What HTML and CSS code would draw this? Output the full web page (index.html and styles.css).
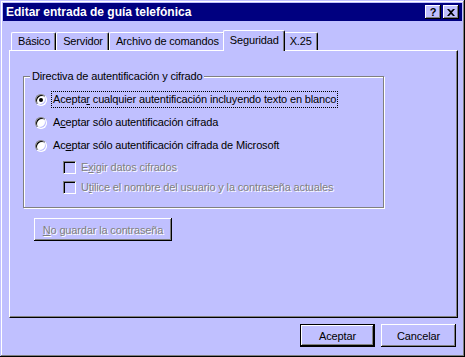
FILE: index.html
```html
<!DOCTYPE html>
<html lang="es">
<head>
    <meta charset="UTF-8">
    <title>Editar entrada de guía telefónica</title>
    <link rel="stylesheet" href="styles.css">
</head>
<body>
    <div class="ventana">
        <div class="titulo">
            <span>Editar entrada de guía telefónica</span>
            <div class="titulo-botones">
                <span class="tbtn">?</span>
                <span class="tbtn">
                    <svg width="8" height="7" viewBox="0 0 8 7"><path d="M0 0h2l2 2 2-2h2L5 3.5 8 7H6L4 5 2 7H0l3-3.5z" fill="#000"/></svg>
                </span>
            </div>
        </div>

        <div class="pestanas">
            <div class="pestana primera">Básico</div>
            <div class="pestana">Servidor</div>
            <div class="pestana">Archivo de comandos</div>
            <div class="pestana activa">Seguridad</div>
            <div class="pestana">X.25</div>
        </div>

        <div class="panel">
            <div class="grupo">
                <div class="grupo-titulo">Directiva de autentificación y cifrado</div>

                <div class="opcion">
                    <span class="radio marcado"></span>
                    <span class="etiqueta foco">Acepta<u>r</u> cualquier autentificación incluyendo texto en blanco</span>
                </div>
                <div class="opcion">
                    <span class="radio"></span>
                    <span class="etiqueta">A<u>c</u>eptar sólo autentificación cifrada</span>
                </div>
                <div class="opcion">
                    <span class="radio"></span>
                    <span class="etiqueta">Ac<u>e</u>ptar sólo autentificación cifrada de Microsoft</span>
                </div>
                <div class="casilla-fila">
                    <span class="casilla"></span>
                    <span class="deshabilitado">E<u>x</u>igir datos cifrados</span>
                </div>
                <div class="casilla-fila">
                    <span class="casilla"></span>
                    <span class="deshabilitado">U<u>t</u>ilice el nombre del usuario y la contraseña actuales</span>
                </div>
            </div>

            <button type="button" class="boton ancho deshabilitado"><u>N</u>o guardar la contraseña</button>
        </div>

        <div class="acciones">
            <button type="button" class="boton defecto">Aceptar</button>
            <button type="button" class="boton">Cancelar</button>
        </div>
    </div>
</body>
</html>
```

FILE: styles.css
```css
body {
    margin: 0;
    background-color: #c0c0ff;
    font-family: "Liberation Sans", Arial, sans-serif;
    font-size: 11px;
    letter-spacing: -0.15px;
    color: #000;
}
.ventana {
    width: 465px;
    height: 357px;
    box-sizing: border-box;
    padding: 3px;
    display: flex;
    flex-direction: column;
    background: #c0c0ff;
    box-shadow: inset -1px -1px 0 #000, inset 1px 1px 0 #c0c0ff, inset -2px -2px 0 #808080, inset 2px 2px 0 #fff;
}
.titulo {
    height: 18px;
    flex: none;
    display: flex;
    align-items: center;
    justify-content: space-between;
    padding: 0 3px;
    background: #000080;
    color: #fff;
    font-weight: bold;
    font-size: 12px;
    letter-spacing: 0;
}
.titulo-botones {
    display: flex;
    gap: 2px;
}
.tbtn {
    width: 16px;
    height: 14px;
    box-sizing: border-box;
    display: flex;
    align-items: center;
    justify-content: center;
    background: #c0c0ff;
    color: #000;
    font-size: 11px;
    box-shadow: inset -1px -1px 0 #000, inset 1px 1px 0 #fff, inset -2px -2px 0 #808080;
}
.pestanas {
    display: flex;
    align-items: flex-end;
    height: 21px;
    margin: 9px 0 -1px 6px;
    position: relative;
    z-index: 1;
}
.pestana {
    height: 18px;
    box-sizing: border-box;
    margin-bottom: 1px;
    padding: 2px 5px 0 6px;
    border-top: 1px solid #fff;
    border-left: 1px solid #fff;
    border-right: 1px solid #000;
    border-radius: 2px 2px 0 0;
    box-shadow: inset -1px 0 0 #808080;
    background: #c0c0ff;
    white-space: nowrap;
}
.primera {
    margin-left: 2px;
}
.pestana.activa {
    height: 21px;
    margin: 0 -2px;
    padding: 3px 5px 0 6px;
    position: relative;
    z-index: 2;
}
.panel {
    height: 268px;
    flex: none;
    box-sizing: border-box;
    margin: 0 4px 0 6px;
    padding: 25px 0 0 13px;
    border-top: 1px solid #fff;
    border-left: 1px solid #fff;
    border-right: 1px solid #000;
    border-bottom: 1px solid #000;
    box-shadow: inset -1px -1px 0 #808080;
}
.grupo {
    width: 361px;
    box-sizing: border-box;
    padding: 0 0 10px 11px;
    border: 1px solid #808080;
    box-shadow: inset 1px 1px 0 #fff, 1px 1px 0 #fff;
}
.grupo-titulo {
    width: fit-content;
    margin: -7px 0 5px -5px;
    padding: 0 2px;
    line-height: 13px;
    background: #c0c0ff;
}
.opcion {
    height: 23px;
    display: flex;
    align-items: center;
}
.radio {
    width: 12px;
    height: 12px;
    flex: none;
    box-sizing: border-box;
    border-radius: 50%;
    border: 1px solid;
    border-color: #808080 #fff #fff #808080;
    background: #fff;
    box-shadow: inset 1px 1px 0 #000, inset -1px -1px 0 #c0c0ff;
    margin-right: 4px;
    position: relative;
}
.radio.marcado::after {
    content: "";
    position: absolute;
    left: 3px;
    top: 3px;
    width: 4px;
    height: 4px;
    border-radius: 50%;
    background: #000;
}
.etiqueta {
    padding: 1px;
    line-height: 13px;
    border: 1px dotted transparent;
}
.etiqueta.foco {
    border-color: #000;
}
.casilla-fila {
    height: 20px;
    display: flex;
    align-items: center;
    padding-left: 28px;
}
.casilla {
    width: 13px;
    height: 13px;
    flex: none;
    box-sizing: border-box;
    border: 1px solid;
    border-color: #808080 #fff #fff #808080;
    box-shadow: inset 1px 1px 0 #000, inset -1px -1px 0 #c0c0ff;
    margin-right: 5px;
}
.deshabilitado {
    color: #808080;
    text-shadow: 1px 1px 0 #fff;
}
.boton {
    width: 75px;
    height: 23px;
    box-sizing: border-box;
    padding: 0;
    border: none;
    background: #c0c0ff;
    font-family: inherit;
    font-size: 11px;
    letter-spacing: inherit;
    color: #000;
    box-shadow: inset -1px -1px 0 #000, inset 1px 1px 0 #fff, inset -2px -2px 0 #808080;
}
.boton.ancho {
    width: 138px;
    margin: 10px 0 0 11px;
    display: block;
}
.boton.deshabilitado {
    color: #808080;
}
.boton.defecto {
    border: 1px solid #000;
    box-shadow: inset -1px -1px 0 #000, inset 1px 1px 0 #fff, inset -2px -2px 0 #808080;
}
.acciones {
    display: flex;
    justify-content: flex-end;
    gap: 6px;
    margin-top: 6px;
    padding-right: 6px;
}
```
